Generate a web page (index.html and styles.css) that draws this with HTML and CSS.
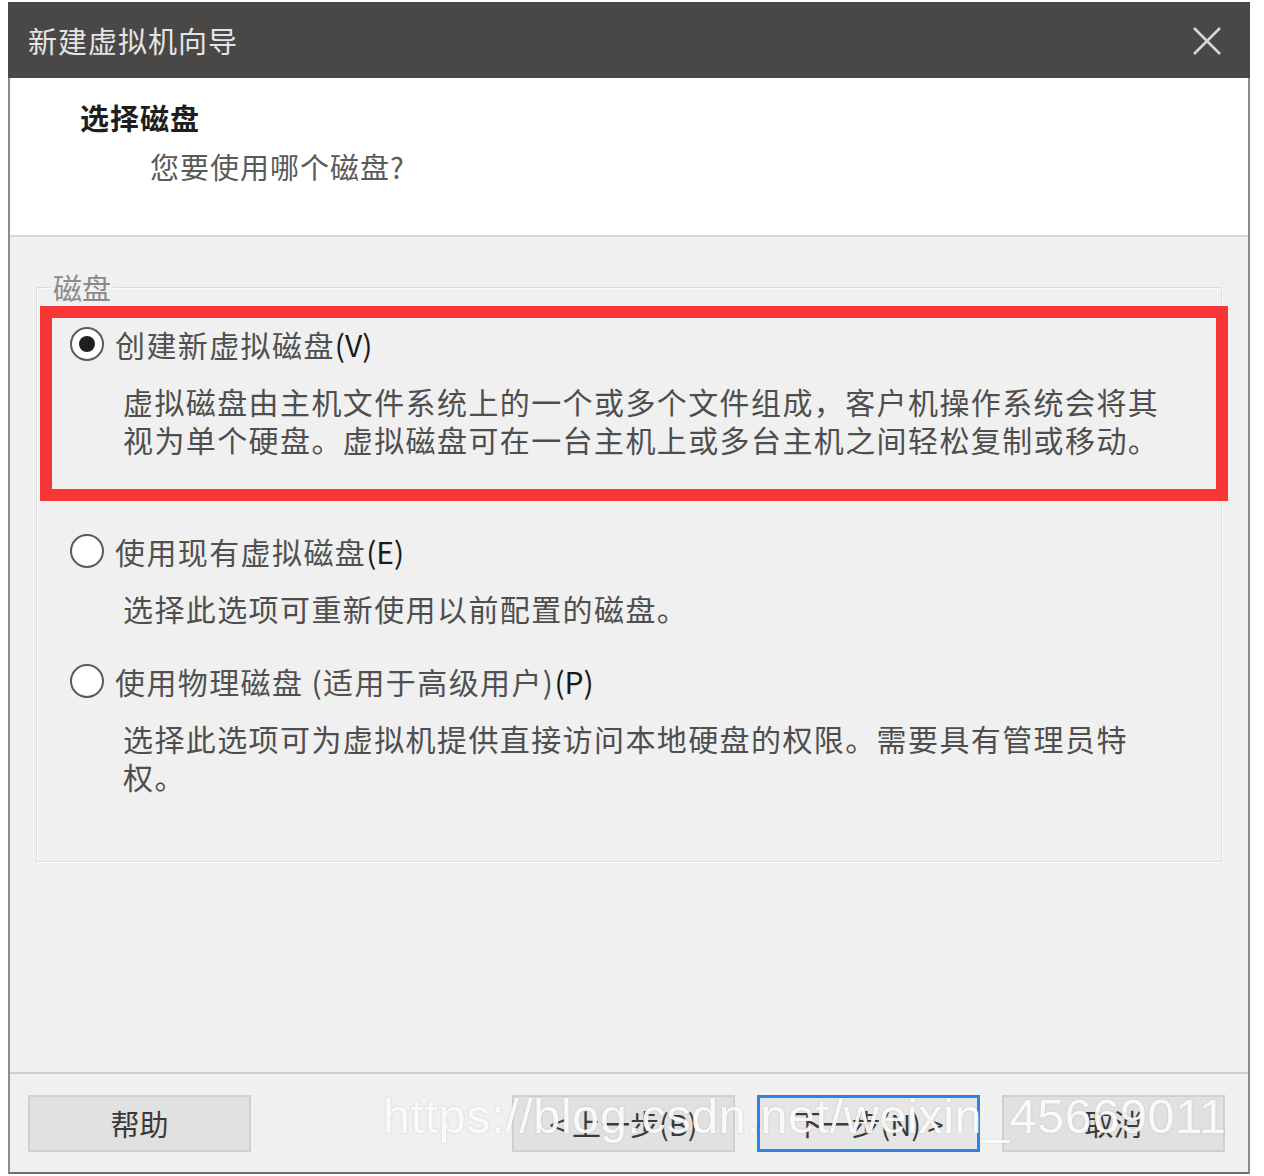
FILE: index.html
```html
<!DOCTYPE html>
<html lang="zh-CN">
<head>
<meta charset="utf-8">
<title>新建虚拟机向导</title>
<link rel="stylesheet" href="styles.css">
</head>
<body>
<div class="dialog">
  <div class="titlebar">
    <span class="title">新建虚拟机向导</span>
    <svg class="close" width="30" height="30" viewBox="0 0 30 30"><path d="M2 2 L28 28 M28 2 L2 28" stroke="#d6d6d6" stroke-width="2.6" fill="none"/></svg>
  </div>
  <div class="frame">
    <div class="header">
      <div class="heading">选择磁盘</div>
      <div class="subheading">您要使用哪个磁盘?</div>
    </div>
    <div class="content">
      <fieldset class="group">
        <legend class="legend">磁盘</legend>
        <div class="option highlight">
          <div class="opt-row"><span class="radio checked"></span><span class="opt-label">创建新虚拟磁盘<span class="key">(V)</span></span></div>
          <div class="opt-desc">虚拟磁盘由主机文件系统上的一个或多个文件组成，客户机操作系统会将其视为单个硬盘。虚拟磁盘可在一台主机上或多台主机之间轻松复制或移动。</div>
        </div>
        <div class="option second">
          <div class="opt-row"><span class="radio"></span><span class="opt-label">使用现有虚拟磁盘<span class="key">(E)</span></span></div>
          <div class="opt-desc">选择此选项可重新使用以前配置的磁盘。</div>
        </div>
        <div class="option third">
          <div class="opt-row"><span class="radio"></span><span class="opt-label">使用物理磁盘 (适用于高级用户)<span class="key">(P)</span></span></div>
          <div class="opt-desc">选择此选项可为虚拟机提供直接访问本地硬盘的权限。需要具有管理员特权。</div>
        </div>
      </fieldset>
    </div>
    <div class="footer">
      <button class="btn help">帮助</button>
      <div class="nav">
        <button class="btn">&lt; 上一步(B)</button>
        <button class="btn primary">下一步(N) &gt;</button>
        <button class="btn">取消</button>
      </div>
      <div class="watermark">https://blog.csdn.net/weixin_45669011</div>
    </div>
  </div>
</div>
</body>
</html>
```
FILE: styles.css
```css
* { box-sizing: border-box; }
html, body { margin: 0; padding: 0; background: #ffffff; }
body {
  font-family: "Noto Sans CJK SC", "Liberation Sans", sans-serif;
  width: 1264px;
  height: 1176px;
  overflow: hidden;
}
.dialog {
  margin: 2px 0 0 8px;
  width: 1242px;
  height: 1172px;
  display: flex;
  flex-direction: column;
}
.titlebar {
  height: 76px;
  background: #4a4846;
  display: flex;
  align-items: center;
  justify-content: space-between;
  padding: 0 28px 0 20px;
  flex: none;
}
.title {
  color: #e4e4e4;
  font-size: 29px;
  letter-spacing: 1px;
  line-height: 1;
}
.close { display: block; margin-top: 2px; }
.frame {
  flex: 1;
  display: flex;
  flex-direction: column;
  border-left: 2px solid #8c8c8c;
  border-right: 2px solid #8c8c8c;
  border-bottom: 2px solid #6e6e6e;
  background: #f0f0f0;
}
.header {
  height: 159px;
  background: #ffffff;
  border-bottom: 2px solid #d9d9d9;
  padding: 19px 0 0 70px;
  flex: none;
}
.heading {
  font-size: 29px;
  font-weight: 700;
  line-height: 40px;
  color: #1e1e1e;
  letter-spacing: 1px;
}
.subheading {
  font-size: 29px;
  line-height: 40px;
  color: #5a5a5a;
  padding-left: 70px;
  margin-top: 9px;
  letter-spacing: 1px;
}
.content {
  flex: 1;
  padding: 35px 0 0 26px;
}
.group {
  margin: 0;
  width: 1186px;
  height: 590px;
  border: 1px solid #dcdcdc;
  box-shadow: inset 1px 1px 0 #fafafa, 1px 1px 0 #fafafa;
  padding: 0;
}
.legend {
  margin-left: 14px;
  padding: 0 2px;
  font-size: 29px;
  line-height: 30px;
  color: #8a8a8a;
}
.option { padding-left: 33px; }
.highlight {
  margin: 4px -7px 0 3px;
  border: 12px solid #f93636;
  padding: 7px 0 31px 18px;
}
.second { margin-top: 31px; }
.third { margin-top: 35px; }
.opt-row {
  display: flex;
  align-items: center;
  height: 38px;
}
.radio {
  width: 34px;
  height: 34px;
  border-radius: 50%;
  border: 2px solid #5a5a5a;
  background: #ffffff;
  flex: none;
  position: relative;
  margin-right: 11px;
}
.radio.checked::after {
  content: "";
  position: absolute;
  left: 7px;
  top: 7px;
  width: 16px;
  height: 16px;
  border-radius: 50%;
  background: #1f1f1f;
}
.opt-label {
  font-size: 30px;
  letter-spacing: 1.4px;
  color: #505050;
  line-height: 38px;
}
.key { color: #1a1a1a; letter-spacing: 0; }
.opt-desc {
  margin: 19px 0 0 53px;
  width: 1050px;
  font-size: 30px;
  letter-spacing: 1.4px;
  line-height: 38px;
  color: #4e4e4e;
}
.footer {
  height: 100px;
  flex: none;
  border-top: 2px solid #cdcdcd;
  display: flex;
  align-items: center;
  justify-content: space-between;
  padding: 0 23px 0 18px;
  position: relative;
}
.nav { display: flex; gap: 22px; }
.btn {
  width: 223px;
  height: 57px;
  background: #e1e1e1;
  border: 2px solid #d0d0d0;
  font-family: "Noto Sans CJK SC", "Liberation Sans", sans-serif;
  font-size: 29px;
  color: #3a3a3a;
  padding: 0;
  margin: 0;
}
.btn.primary {
  border: 3px solid #2b84e2;
  background: #e6e6e6;
}
.watermark {
  position: absolute;
  left: 373px;
  top: 14px;
  font-family: "Liberation Sans", sans-serif;
  font-size: 48.5px;
  letter-spacing: 0.6px;
  color: rgba(255, 255, 255, 0.9);
  text-shadow: 0 0 2px rgba(120, 120, 120, 0.35);
  white-space: nowrap;
  pointer-events: none;
}
```
